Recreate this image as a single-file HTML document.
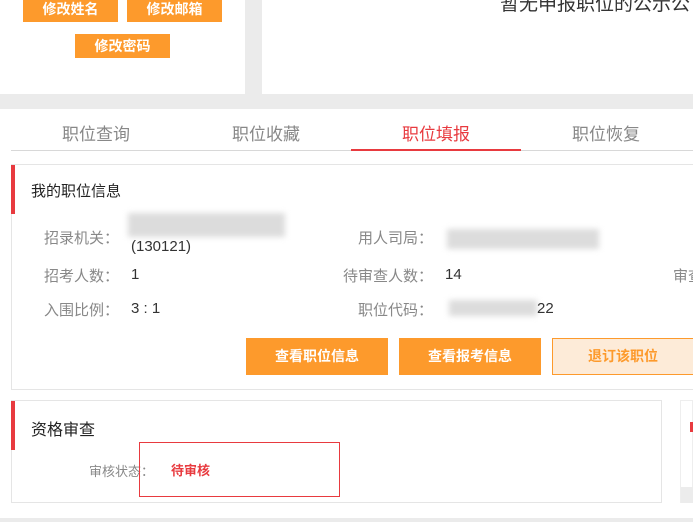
<!DOCTYPE html>
<html><head><meta charset="utf-8"><style>
*{margin:0;padding:0;box-sizing:border-box}
body{width:693px;height:522px;overflow:hidden;background:#ebebeb;font-family:"Liberation Sans","Noto Sans CJK SC",sans-serif;position:relative}
.a{position:absolute;white-space:nowrap}
.ob{position:absolute;background:#fd9a2c;color:#fff;font-weight:bold;font-size:14px;text-align:center}
.lb{position:absolute;color:#888;font-size:15px;white-space:nowrap}
.v{position:absolute;color:#333;font-size:15px;white-space:nowrap}
.blur{position:absolute;background:#dcdcdc;filter:blur(3px)}
</style></head><body>
<div class="a" style="left:0;top:0;width:245px;height:94px;background:#fff"></div>
<div class="a" style="left:262px;top:0;width:431px;height:94px;background:#fff"></div>
<div class="ob" style="left:23px;top:-2px;width:95px;height:24px;line-height:22px">修改姓名</div>
<div class="ob" style="left:127px;top:-2px;width:95px;height:24px;line-height:22px">修改邮箱</div>
<div class="ob" style="left:75px;top:34px;width:95px;height:24px;line-height:24px">修改密码</div>
<div class="a" style="left:500px;top:-11px;font-size:19px;color:#333">暂无申报职位的公示公</div>
<div class="a" style="left:0;top:109px;width:693px;height:409px;background:#fff"></div>
<div class="a" style="left:11px;top:150px;width:682px;height:1px;background:#d8d8d8"></div>
<div class="a" style="left:351px;top:149px;width:170px;height:2px;background:#e83a3f"></div>
<div class="a" style="left:62px;top:120px;font-size:17px;color:#888">职位查询</div>
<div class="a" style="left:232px;top:120px;font-size:17px;color:#888">职位收藏</div>
<div class="a" style="left:402px;top:120px;font-size:17px;color:#e83a3f">职位填报</div>
<div class="a" style="left:572px;top:120px;font-size:17px;color:#888">职位恢复</div>
<div class="a" style="left:11px;top:164px;width:690px;height:226px;border:1px solid #e5e5e5"></div>
<div class="a" style="left:11px;top:165px;width:4px;height:49px;background:#e83a3f"></div>
<div class="a" style="left:31px;top:180px;font-size:15px;color:#222">我的职位信息</div>
<div class="blur" style="left:128px;top:213px;width:157px;height:24px"></div>
<div class="lb" style="left:44px;top:227px">招录机关：</div>
<div class="v" style="left:131px;top:238px">(130121)</div>
<div class="lb" style="left:358px;top:227px">用人司局：</div>
<div class="blur" style="left:447px;top:229px;width:152px;height:20px"></div>
<div class="lb" style="left:44px;top:265px">招考人数：</div>
<div class="v" style="left:131px;top:266px">1</div>
<div class="lb" style="left:343px;top:265px">待审查人数：</div>
<div class="v" style="left:445px;top:266px">14</div>
<div class="lb" style="left:673px;top:265px">审查</div>
<div class="lb" style="left:44px;top:299px">入围比例：</div>
<div class="v" style="left:131px;top:300px">3 : 1</div>
<div class="lb" style="left:358px;top:299px">职位代码：</div>
<div class="blur" style="left:449px;top:300px;width:88px;height:16px"></div>
<div class="v" style="left:537px;top:300px">22</div>
<div class="ob" style="left:246px;top:338px;width:142px;height:37px;line-height:37px">查看职位信息</div>
<div class="ob" style="left:399px;top:338px;width:142px;height:37px;line-height:37px">查看报考信息</div>
<div class="ob" style="left:552px;top:338px;width:150px;height:37px;line-height:35px;background:#fdebd8;border:1px solid #fd9a2c;color:#fd9a2c;text-align:left;padding-left:35px">退订该职位</div>
<div class="a" style="left:11px;top:400px;width:651px;height:103px;border:1px solid #e5e5e5"></div>
<div class="a" style="left:11px;top:401px;width:4px;height:49px;background:#e83a3f"></div>
<div class="a" style="left:31px;top:416px;font-size:16px;color:#222">资格审查</div>
<div class="a" style="left:89px;top:461px;font-size:13px;color:#888">审核状态：</div>
<div class="a" style="left:171px;top:460px;font-size:13px;color:#e83a3f;font-weight:bold">待审核</div>
<div class="a" style="left:139px;top:442px;width:201px;height:55px;border:1px solid #e83a3f"></div>
<div class="a" style="left:680px;top:400px;width:13px;height:103px;border:1px solid #eee;background:#fff"></div>
<div class="a" style="left:690px;top:422px;width:3px;height:10px;background:#e83a3f"></div>
<div class="a" style="left:681px;top:487px;width:12px;height:16px;background:#ececec"></div>
</body></html>
